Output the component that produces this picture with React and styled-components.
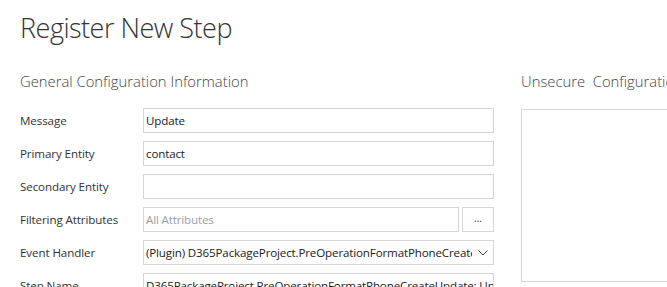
import React from 'react';
import styled, { createGlobalStyle } from 'styled-components';

const GlobalStyle = createGlobalStyle`
  html, body {
    margin: 0;
    padding: 0;
    background: #ffffff;
    overflow: hidden;
  }
  body {
    font-family: "Open Sans", "Noto Sans", "Liberation Sans", sans-serif;
    color: #333;
  }
`;

const Page = styled.div`
  width: 667px;
  height: 287px;
  overflow: hidden;
  padding: 0 0 0 20px;
  box-sizing: border-box;
`;

const Title = styled.h1`
  margin: 0;
  padding-top: 9px;
  height: 56px;
  font-size: 27px;
  font-weight: 300;
  color: #333;
  letter-spacing: -0.5px;
  white-space: nowrap;
`;

const Columns = styled.div`
  display: flex;
  gap: 27px;
`;

const Column = styled.div`
  display: flex;
  flex-direction: column;
  flex: 0 0 ${p => p.$width}px;
`;

const SectionTitle = styled.h2`
  margin: 0;
  height: 43px;
  padding-top: 6px;
  box-sizing: border-box;
  font-size: 14.8px;
  font-weight: 300;
  color: #444;
  white-space: pre;
`;

const Form = styled.div`
  display: grid;
  grid-template-columns: 123px 351px;
  grid-auto-rows: 25px;
  row-gap: 8px;
  align-items: center;
`;

const Label = styled.div`
  font-size: 11.6px;
  color: #333;
  white-space: nowrap;
  letter-spacing: -0.1px;
`;

const Field = styled.div`
  display: flex;
  gap: 3px;
  height: 25px;
`;

const Box = styled.div`
  flex: 1;
  min-width: 0;
  display: flex;
  align-items: center;
  height: 25px;
  box-sizing: border-box;
  border: 1px solid #d6d6d6;
  padding: 0 3px 0 2px;
  font-size: 11.6px;
  letter-spacing: -0.15px;
  color: ${p => (p.$placeholder ? '#a0a0a0' : '#222')};
  white-space: nowrap;
  overflow: hidden;
`;

const BoxText = styled.span`
  flex: 1;
  min-width: 0;
  overflow: hidden;
  white-space: nowrap;
`;

const DotsButton = styled.div`
  flex: 0 0 32px;
  height: 25px;
  box-sizing: border-box;
  border: 1px solid #d6d6d6;
  display: flex;
  align-items: flex-end;
  justify-content: center;
  padding-bottom: 6px;
  font-size: 10px;
  color: #333;
`;

const Chevron = styled.svg`
  flex: 0 0 auto;
  margin: 0 2px 0 6px;
`;

const ConfigBox = styled.div`
  height: 173px;
  margin-top: 1px;
  width: 200px;
  box-sizing: border-box;
  border: 1px solid #d6d6d6;
`;

const rows = [
  { label: 'Message', value: 'Update' },
  { label: 'Primary Entity', value: 'contact' },
  { label: 'Secondary Entity', value: '' },
];

export default function App() {
  return (
    <>
      <GlobalStyle />
      <Page>
        <Title>Register New Step</Title>
        <Columns>
          <Column $width={474}>
            <SectionTitle>General Configuration Information</SectionTitle>
            <Form>
              {rows.map(r => (
                <React.Fragment key={r.label}>
                  <Label>{r.label}</Label>
                  <Field>
                    <Box>{r.value}</Box>
                  </Field>
                </React.Fragment>
              ))}
              <Label>Filtering Attributes</Label>
              <Field>
                <Box $placeholder>All Attributes</Box>
                <DotsButton>...</DotsButton>
              </Field>
              <Label>Event Handler</Label>
              <Field>
                <Box>
                  <BoxText>(Plugin) D365PackageProject.PreOperationFormatPhoneCreateUpdate</BoxText>
                  <Chevron width="10" height="6" viewBox="0 0 10 6">
                    <polyline points="0.5,0.5 5,5 9.5,0.5" fill="none" stroke="#444" strokeWidth="1" />
                  </Chevron>
                </Box>
              </Field>
              <Label>Step Name</Label>
              <Field>
                <Box>D365PackageProject.PreOperationFormatPhoneCreateUpdate: Update of contact</Box>
              </Field>
            </Form>
          </Column>
          <Column $width={200}>
            <SectionTitle>{'Unsecure  Configuration'}</SectionTitle>
            <ConfigBox />
          </Column>
        </Columns>
      </Page>
    </>
  );
}
